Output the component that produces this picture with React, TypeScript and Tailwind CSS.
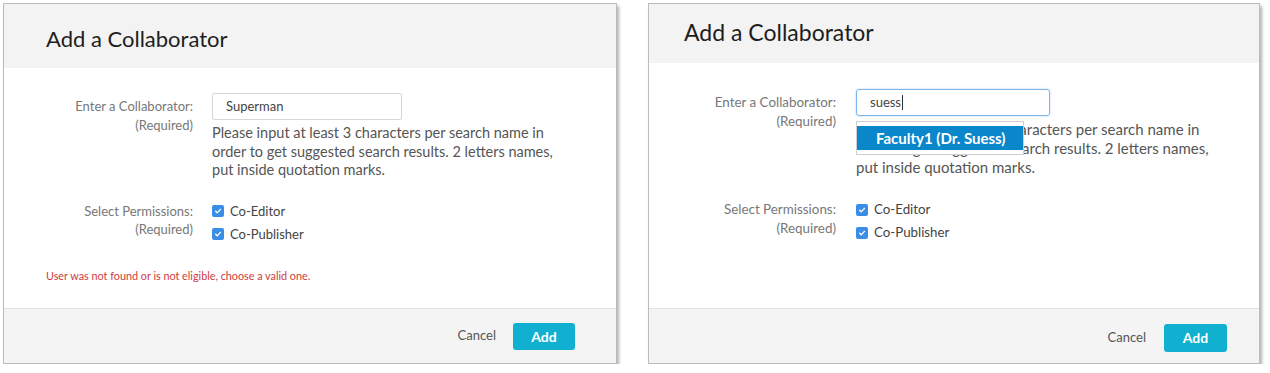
import React from "react";

function Check() {
  return (
    <span className="flex h-[12px] w-[12px] shrink-0 items-center justify-center rounded-[2px] bg-[#3a8ee6]">
      <svg viewBox="0 0 12 12" className="h-[10px] w-[10px]">
        <path d="M3.2 6.3l1.9 1.9 3.8-4.2" stroke="white" strokeWidth="1.6" fill="none" strokeLinecap="round" strokeLinejoin="round" />
      </svg>
    </span>
  );
}

const HELP =
  "Please input at least 3 characters per search name in order to get suggested search results. 2 letters names, put inside quotation marks.";

export default function App() {
  return (
    <div className="flex gap-[31px] bg-white pl-[3px] pt-[3px] font-['Lato',sans-serif]">
      {/* Left dialog */}
      <div className="flex h-[361px] w-[614px] flex-col border border-[#bcbcbc] bg-white shadow-[2px_3px_3px_rgba(0,0,0,0.3)]">
        <div className="h-[64px] bg-[#f3f3f3] pl-[42px] pt-[20px] text-[22px] leading-[29px] text-[#1e1e1e]">
          Add a Collaborator
        </div>
        <div className="h-[240px] pt-[25px]">
          <div className="grid grid-cols-[189px_1fr] gap-x-[19px]">
            <div className="pt-[4px] text-right text-[13px] leading-[19px] text-[#777]">
              <div>Enter a Collaborator:</div>
              <div>(Required)</div>
            </div>
            <div>
              <div className="flex h-[27px] w-[190px] items-center rounded-[2px] border border-[#d6d6d6] pl-[13px] text-[13px] text-[#444]">
                Superman
              </div>
              <div className="mt-[4px] w-[360px] text-[14.5px] leading-[18.5px] text-[#555]">{HELP}</div>
            </div>
          </div>
          <div className="mt-[20px] grid grid-cols-[189px_1fr] gap-x-[19px]">
            <div className="pt-[2px] text-right text-[13px] leading-[18.5px] text-[#777]">
              <div>Select Permissions:</div>
              <div>(Required)</div>
            </div>
            <div className="text-[13px] leading-[23px] text-[#444]">
              <div className="flex items-center gap-[6px]">
                <Check />
                <span>Co-Editor</span>
              </div>
              <div className="flex items-center gap-[6px]">
                <Check />
                <span>Co-Publisher</span>
              </div>
            </div>
          </div>
          <div className="mt-[22px] pl-[42px] text-[10.8px] leading-[16px] text-[#cc3b40]">
            User was not found or is not eligible, choose a valid one.
          </div>
        </div>
        <div className="flex h-[55px] items-center justify-end gap-[17px] border-t border-[#e2e2e2] bg-[#f4f4f4] pr-[41px]">
          <span className="text-[13px] text-[#555]">Cancel</span>
          <span className="flex h-[27px] w-[62px] items-center justify-center rounded-[3px] bg-[#11b0d0] text-[14px] font-bold text-white">
            Add
          </span>
        </div>
      </div>

      {/* Right dialog */}
      <div className="flex h-[361px] w-[612px] flex-col border border-[#bcbcbc] bg-white shadow-[2px_3px_3px_rgba(0,0,0,0.3)]">
        <div className="h-[59px] bg-[#f3f3f3] pl-[35px] pt-[14px] text-[23px] leading-[29px] text-[#1e1e1e]">
          Add a Collaborator
        </div>
        <div className="h-[245px] pt-[26px]">
          <div className="grid grid-cols-[187px_1fr] gap-x-[20px]">
            <div className="pt-[4px] text-right text-[13.4px] leading-[19px] text-[#777]">
              <div>Enter a Collaborator:</div>
              <div>(Required)</div>
            </div>
            <div className="relative">
              <div className="flex h-[27px] w-[194px] items-center rounded-[3px] border border-[#7fb6ea] pl-[13px] text-[13px] text-[#444] shadow-[0_0_2px_rgba(80,150,230,0.5)]">
                suess
                <span className="ml-[1px] h-[15px] w-[1px] bg-[#333]" />
              </div>
              <div className="mt-[4px] w-[370px] text-[15px] leading-[19px] text-[#555]">{HELP}</div>
              <div className="absolute left-0 top-[32px] w-[168px] border border-[#cfcfcf] bg-white py-[4px]">
                <div className="flex h-[24px] items-center bg-[#0a86cb] pl-[19px] text-[15px] font-bold text-white">
                  Faculty1 (Dr. Suess)
                </div>
              </div>
            </div>
          </div>
          <div className="mt-[21px] grid grid-cols-[187px_1fr] gap-x-[20px]">
            <div className="pt-[2px] text-right text-[13.4px] leading-[18.5px] text-[#777]">
              <div>Select Permissions:</div>
              <div>(Required)</div>
            </div>
            <div className="text-[13.3px] leading-[23px] text-[#444]">
              <div className="flex items-center gap-[6px]">
                <Check />
                <span>Co-Editor</span>
              </div>
              <div className="flex items-center gap-[6px]">
                <Check />
                <span>Co-Publisher</span>
              </div>
            </div>
          </div>
        </div>
        <div className="flex h-[55px] items-center justify-end gap-[18px] border-t border-[#e2e2e2] bg-[#f4f4f4] pr-[32px] pt-[3px]">
          <span className="text-[13px] text-[#555]">Cancel</span>
          <span className="flex h-[28px] w-[63px] items-center justify-center rounded-[3px] bg-[#11b0d0] text-[14px] font-bold text-white">
            Add
          </span>
        </div>
      </div>
    </div>
  );
}
